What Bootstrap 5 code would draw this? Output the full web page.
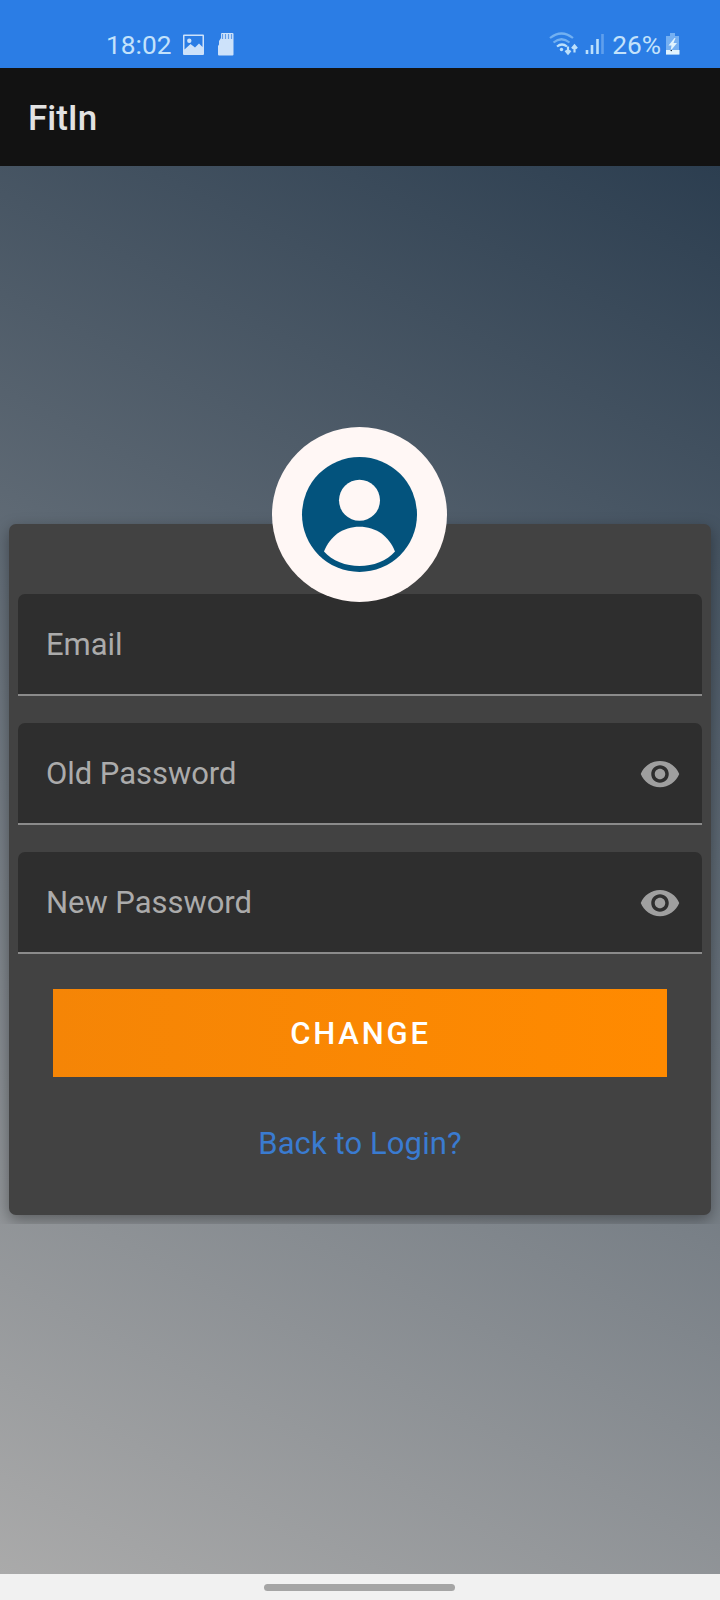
<!DOCTYPE html>
<html lang="en">
<head>
<meta charset="utf-8">
<meta name="viewport" content="width=device-width, initial-scale=1">
<title>FitIn</title>
<link href="https://cdn.jsdelivr.net/npm/bootstrap@5.3.0/dist/css/bootstrap.min.css" rel="stylesheet">
<style>
body{font-family:Roboto,"Noto Sans",sans-serif;width:720px;height:1600px;overflow:hidden}
.statusbar{height:68px;background:#2b7de5;color:#c3e2fb;padding:22px 40px 0 106px;font-size:26.300px;line-height:46px}
.appbar{height:98px;background:#121212;padding:2px 28px 0}
.appbar h1{font-size:35px;font-weight:500;color:#e2e2e2;line-height:1}
.screen{height:1408px;background:linear-gradient(27.08deg,#aaa,#2c3e50);padding:328px 0 0}
.clip{padding:30px 9px 0;height:730px;overflow:hidden}
.panel{height:691px;background:#424242;border:0;border-radius:7px;padding:70px 9px 0;box-shadow:0 5px 15px rgba(0,0,0,.36)}
.avatar{left:272px;top:-67px;width:175px;height:175px}
.field{height:102px;background:#2e2e2e;border-bottom:2px solid #8b8b8b;border-radius:7px 7px 0 0;padding:0 21px 0 28px;margin-bottom:27px;color:#ababab;font-size:31px;letter-spacing:-.05px}
.field span{padding-top:2px}
.field svg{margin-top:1px}
.change{width:614px;height:88px;margin:8px 0 0 35px;border:0;border-radius:0;background:linear-gradient(90deg,#f58506,#ff8a00);color:#fff;font-size:31px;font-weight:500;letter-spacing:2.800px;padding:9px 12px 6px 13px}
.back{margin-top:44px;font-size:31px;letter-spacing:.1px;line-height:46px;color:#3a7bd0}
.navpill{height:26px;background:#f1f1f1;padding-right:1px}
.navpill span{width:191px;height:7px;background:#a5a5a5}
</style>
</head>
<body>
<header class="statusbar d-flex">
  <span class="clock">18:02</span>
  <svg class="ms-2" width="60" height="46" fill="#cde2fa">
    <path fill-rule="evenodd" d="M4 12.500h19q1 0 1 1v18.500q0 1-1 1H4q-1 0-1-1v-18.500q0-1 1-1zM4.500 14v13.500l6-5.500 4.500 3.500 4-4 3.500 3.500V14zM9.300 16.500a2.200 2.200 0 1 1 0 4.400 2.200 2.200 0 0 1 0-4.400z"/>
    <path d="M42 11h10.500q1 0 1 1v20.500q0 1-1 1H39q-1 0-1-1V24l1-1.500V19l2-3v-4q0-1 1-1z"/>
    <path d="M42.500 12v5M45.500 12v5M48.500 12v5M51.500 12v5" stroke="#629de9" stroke-width="1.200"/>
  </svg>
  <svg class="ms-auto" width="62" height="46" fill="none" stroke="#bce0fb" stroke-width="2.200">
    <g stroke="#72b0f1"><path d="M4 16q11.500-9 23 0"/><path d="M7.500 20.500q8-6.500 16 0"/></g>
    <path d="M11 24.500q5-4 10 0"/>
    <circle cx="15.500" cy="27.500" r="1.700" fill="#bce0fb" stroke="none"/>
    <path d="M22 24.500v7M19.500 28.500l2.500 3 2.500-3M28.500 30.500v-7M26 26.500l2.500-3 2.500 3"/>
    <g stroke-width="2.600"><path d="M41 32v-4M46 32V23M51.500 32V17"/><path stroke="#5f9fed" d="M56.500 32V12"/></g>
  </svg>
  <span class="ms-1 percent">26%</span>
  <svg width="15" height="46" class="ms-1"><path fill="#75b0f2" d="M5 11h5v3h4v18.500H1V14h4z"/><path fill="#e1f4fe" d="M1 28h13.500v4.500H1zM9.500 16 3.500 23.500h3l-1 5.500 6.500-8H8.500l2-5z"/><circle cx="6.300" cy="28.500" r=".7" fill="#123"/></svg>
</header>
<nav class="appbar d-flex align-items-center"><h1 class="m-0">FitIn</h1></nav>
<main class="screen">
  <div class="position-relative">
  <div class="clip">
  <form class="card panel">
    <div class="field d-flex align-items-center"><span>Email</span></div>
    <div class="field d-flex align-items-center justify-content-between"><span>Old Password</span>
      <svg width="42" height="42" viewBox="0 0 24 24" fill="#9f9f9f"><path d="M12 4.500C7 4.500 2.730 7.610 1 12c1.730 4.390 6 7.500 11 7.500s9.270-3.110 11-7.500c-1.730-4.390-6-7.500-11-7.500zM12 17c-2.760 0-5-2.240-5-5s2.240-5 5-5 5 2.240 5 5-2.240 5-5 5zm0-8c-1.660 0-3 1.340-3 3s1.340 3 3 3 3-1.340 3-3-1.340-3-3-3z"/></svg></div>
    <div class="field d-flex align-items-center justify-content-between"><span>New Password</span>
      <svg width="42" height="42" viewBox="0 0 24 24" fill="#9f9f9f"><path d="M12 4.500C7 4.500 2.730 7.610 1 12c1.730 4.390 6 7.500 11 7.500s9.270-3.110 11-7.500c-1.730-4.390-6-7.500-11-7.500zM12 17c-2.760 0-5-2.240-5-5s2.240-5 5-5 5 2.240 5 5-2.240 5-5 5zm0-8c-1.660 0-3 1.340-3 3s1.340 3 3 3 3-1.340 3-3-1.340-3-3-3z"/></svg></div>
    <button type="button" class="btn change">CHANGE</button>
    <a class="back text-center text-decoration-none">Back to Login?</a>
  </form>
  </div>
  <svg class="avatar position-absolute" viewBox="0 0 175 175">
    <circle cx="87.500" cy="87.500" r="87.500" fill="#fff7f5"/>
    <circle cx="87.500" cy="87.500" r="57.500" fill="#03537d"/>
    <g fill="#fff7f5"><circle cx="87.500" cy="73.300" r="20.500"/><path d="M52 124.500C58 109 71 99.700 87.500 99.700S117 109 123 124.500C115 134 101 139 87.500 139S60 134 52 124.500z"/></g>
  </svg>
  </div>
</main>
<footer class="navpill d-flex justify-content-center align-items-center"><span class="rounded-pill"></span></footer>
<script src="https://cdn.jsdelivr.net/npm/bootstrap@5.3.0/dist/js/bootstrap.bundle.min.js"></script>
</body>
</html>
